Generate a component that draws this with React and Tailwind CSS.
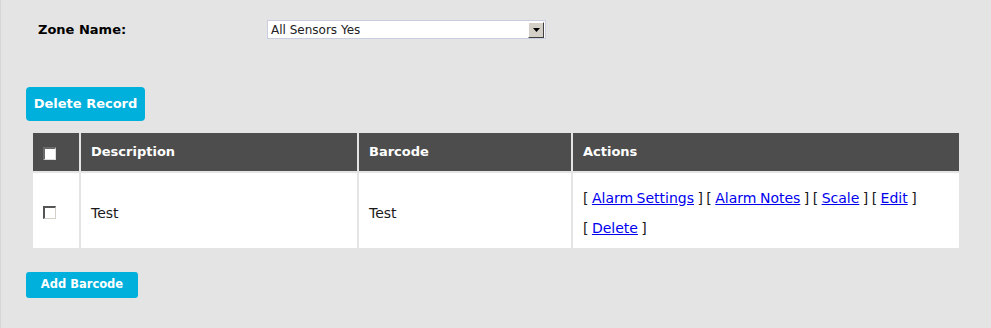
export default function App() {
  const Box = ({ dark }) => (
    <span
      className={`inline-block w-[13px] h-[13px] border-t-2 border-l-2 border-r border-b bg-white ${
        dark ? 'border-t-[#6a6a6a] border-l-[#6a6a6a] border-r-[#dcdcdc] border-b-[#dcdcdc]' : 'border-t-[#555] border-l-[#555] border-r-[#d4d0c8] border-b-[#d4d0c8]'
      }`}
    />
  )

  const Link = ({ children }) => (
    <a href="#" className="text-[#0000ee] underline">{children}</a>
  )

  return (
    <div className="w-[991px] h-[328px] bg-[#e4e4e4] border-l border-[#d6d6d6] text-[14px] text-[#1a1a1a] font-['DejaVu_Sans',sans-serif] overflow-hidden">
      {/* zone select */}
      <div className="flex items-center pt-[20px] h-[39px]">
        <div className="w-[266px] pl-[37px] font-bold text-[13px] text-black">Zone Name:</div>
        <div className="w-[279px] h-[19px] bg-white border border-[#c9cde0] flex items-center justify-between">
          <span className="pl-[3px] text-[12px] text-[#222]">All Sensors Yes</span>
          <span className="w-[16px] h-[16px] mr-[1px] bg-[#d4d0c8] border-t border-l border-t-white border-l-white border-r border-b border-r-[#404040] border-b-[#404040] flex items-center justify-center">
            <svg width="7" height="4" viewBox="0 0 7 4"><path d="M0 0h7L3.5 4z" fill="#000" /></svg>
          </span>
        </div>
      </div>

      {/* delete */}
      <div className="pl-[25px] pt-[48px]">
        <button className="w-[119px] h-[34px] rounded-[4px] bg-[#00b0dc] text-white font-semibold text-[13px]">
          Delete Record
        </button>
      </div>

      {/* table */}
      <div className="ml-[32px] mt-[12px] w-[926px] grid grid-cols-[46px_276px_212px_386px] gap-[2px]">
        <div className="h-[38px] bg-[#4d4d4d] flex items-center pl-[10px] pt-[2px]">
          <Box dark />
        </div>
        <div className="h-[38px] bg-[#4d4d4d] flex items-center pl-[10px] text-white font-bold text-[13px]">Description</div>
        <div className="h-[38px] bg-[#4d4d4d] flex items-center pl-[10px] text-white font-bold text-[13px]">Barcode</div>
        <div className="h-[38px] bg-[#4d4d4d] flex items-center pl-[10px] text-white font-bold text-[13px]">Actions</div>

        <div className="h-[75px] bg-white flex items-center pl-[10px] pt-[4px]">
          <Box />
        </div>
        <div className="h-[75px] bg-white flex items-center pl-[10px] pt-[5px]">Test</div>
        <div className="h-[75px] bg-white flex items-center pl-[10px] pt-[5px]">Test</div>
        <div className="h-[75px] bg-white flex flex-col justify-center pl-[10px] pt-[4px] leading-[30px] [word-spacing:-1px]">
          <div>
            [ <Link>Alarm Settings</Link> ] [ <Link>Alarm Notes</Link> ] [ <Link>Scale</Link> ] [ <Link>Edit</Link> ]
          </div>
          <div>
            [ <Link>Delete</Link> ]
          </div>
        </div>
      </div>

      {/* add */}
      <div className="pl-[25px] pt-[24px]">
        <button className="w-[112px] h-[26px] rounded-[3px] bg-[#00b0dc] text-white font-bold text-[11.5px]">
          Add Barcode
        </button>
      </div>
    </div>
  )
}
